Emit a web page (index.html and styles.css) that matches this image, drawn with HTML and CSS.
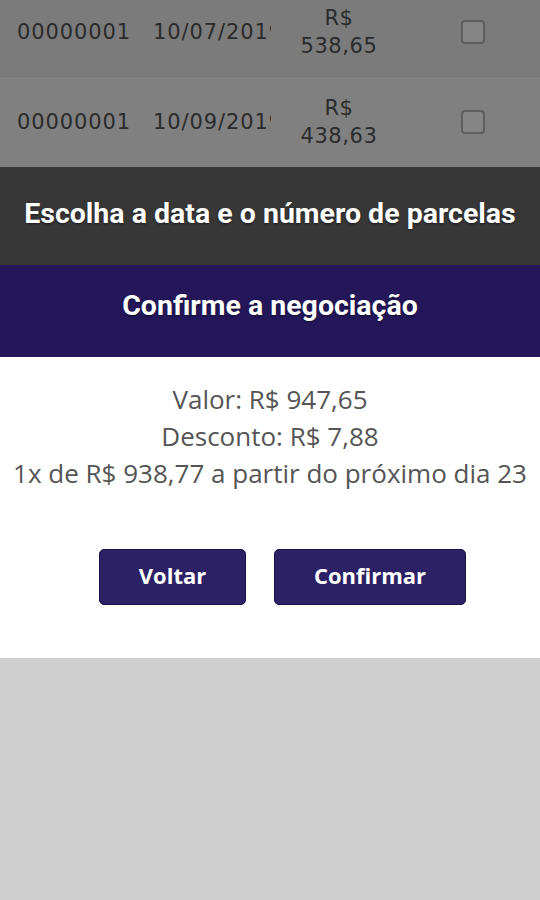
FILE: index.html
```html
<!DOCTYPE html>
<html lang="pt-BR">
<head>
    <meta charset="UTF-8">
    <meta name="viewport" content="width=device-width, initial-scale=1.0">
    <title>Negociação</title>
    <link rel="stylesheet" href="styles.css">
</head>
<body>
    <div class="page">
        <div class="table">
            <div class="row row-first">
                <div class="cell cell-id">00000001</div>
                <div class="cell cell-date">10/07/2019</div>
                <div class="cell cell-value">R$<br>538,65</div>
                <div class="cell cell-check"><span class="check"></span></div>
            </div>
            <div class="row row-alt">
                <div class="cell cell-id">00000001</div>
                <div class="cell cell-date">10/09/2019</div>
                <div class="cell cell-value">R$<br>438,63</div>
                <div class="cell cell-check"><span class="check"></span></div>
            </div>
        </div>

        <div class="title-bar">Escolha a data e o número de parcelas</div>

        <div class="modal">
            <div class="modal-head">Confirme a negociação</div>
            <div class="modal-body">
                <p>Valor: R$ 947,65</p>
                <p>Desconto: R$ 7,88</p>
                <p>1x de R$ 938,77 a partir do próximo dia 23</p>
            </div>
            <div class="modal-actions">
                <button class="btn btn-back">Voltar</button>
                <button class="btn btn-confirm">Confirmar</button>
            </div>
        </div>

        <div class="rest"></div>
    </div>
</body>
</html>
```

FILE: styles.css
```css
:root {
    --purple: #23175a;
    --btn: #2d2165;
}

html, body {
    height: 100%;
}

body {
    margin: 0;
    background-color: #cfcfcf;
    overflow: hidden;
}

.page {
    display: flex;
    flex-direction: column;
    height: 100%;
}

/* tabela escurecida atrás do modal */
.table {
    height: 167px;
    overflow: hidden;
    background-color: #7b7b7b;
}

.row {
    display: flex;
    align-items: center;
    height: 90px;
    font-family: 'DejaVu Sans', sans-serif;
    font-size: 21px;
    letter-spacing: 0.9px;
    color: #2b2b2b;
    border-bottom: 1px solid #777;
    box-sizing: border-box;
}

.row-first {
    margin-top: -13px;
}

.row-alt {
    background-color: #808080;
    border-bottom: none;
}

.cell-id {
    width: 136px;
    padding-left: 17px;
    box-sizing: border-box;
    white-space: nowrap;
}

.cell-date {
    width: 118px;
    margin-left: 17px;
    overflow: hidden;
    white-space: nowrap;
}

.cell-value {
    width: 136px;
    text-align: center;
    line-height: 28px;
    letter-spacing: 0.6px;
}

.cell-check {
    flex: 1;
    display: flex;
    justify-content: center;
    padding-right: 2px;
}

.check {
    display: block;
    width: 20px;
    height: 20px;
    border: 2px solid #5e5e5e;
    border-radius: 4px;
    background-color: #858585;
}

.title-bar {
    height: 98px;
    padding-bottom: 6px;
    box-sizing: border-box;
    display: flex;
    align-items: center;
    justify-content: center;
    background-color: #373737;
    color: #fff;
    font-family: Roboto, sans-serif;
    font-weight: bold;
    font-size: 28.5px;
    text-shadow: 0 1px 2px rgba(0, 0, 0, 0.5);
}

.modal {
    background-color: #fff;
}

.modal-head {
    height: 92px;
    padding-bottom: 12px;
    box-sizing: border-box;
    display: flex;
    align-items: center;
    justify-content: center;
    background-color: var(--purple);
    color: #fff;
    font-family: Roboto, sans-serif;
    font-weight: bold;
    font-size: 28.5px;
    text-shadow: 0 1px 2px rgba(0, 0, 0, 0.5);
}

.modal-body {
    padding-top: 24px;
    text-align: center;
    font-family: 'Open Sans', sans-serif;
    font-size: 26px;
    color: #555;
}

.modal-body p {
    margin: 0;
    line-height: 37px;
}

.modal-actions {
    display: flex;
    justify-content: center;
    gap: 28px;
    padding: 57px 0 53px;
    margin-left: 25px;
}

.btn {
    height: 56px;
    padding-bottom: 5px;
    border: 1px solid #1a1045;
    border-radius: 5px;
    background-color: var(--btn);
    color: #fff;
    font-family: 'Open Sans', sans-serif;
    font-weight: bold;
    font-size: 22px;
    cursor: pointer;
}

.btn-back {
    width: 147px;
}

.btn-confirm {
    width: 192px;
}

.rest {
    flex: 1;
    background-color: #cfcfcf;
}
```
